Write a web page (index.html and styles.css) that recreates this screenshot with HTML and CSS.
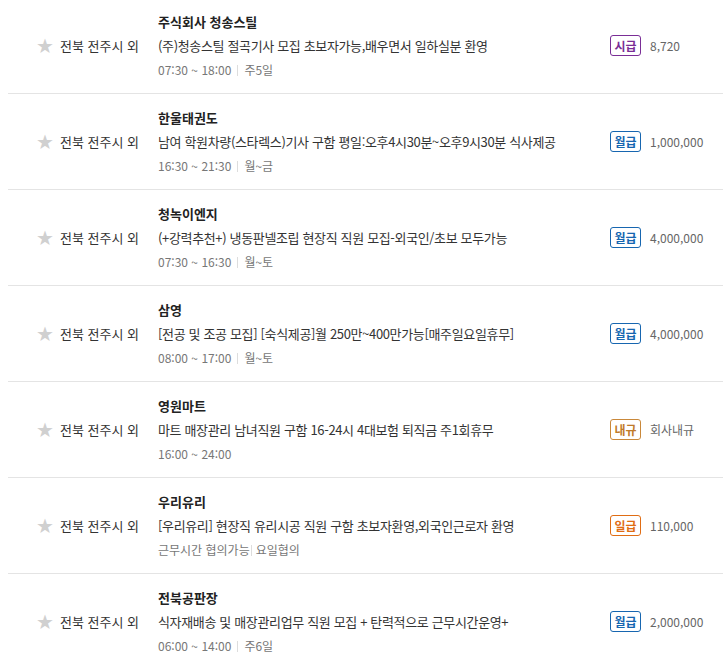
FILE: index.html
```html
<!DOCTYPE html>
<html lang="ko">
<head>
    <meta charset="UTF-8" />
    <title>채용정보</title>
    <link rel="stylesheet" href="styles.css">
</head>
<body>
    <ul class="job-list">
        <li class="job">
            <div class="loc"><span class="star">★</span>전북 전주시 외</div>
            <div class="info">
                <div class="company">주식회사 청송스틸</div>
                <div class="title">(주)청송스틸 절곡기사 모집 초보자가능,배우면서 일하실분 환영</div>
                <div class="meta">07:30 ~ 18:00<span class="bar"></span>주5일</div>
            </div>
            <div class="pay"><span class="badge hour">시급</span>8,720</div>
        </li>
        <li class="job">
            <div class="loc"><span class="star">★</span>전북 전주시 외</div>
            <div class="info">
                <div class="company">한울태권도</div>
                <div class="title">남여 학원차량(스타렉스)기사 구함 평일:오후4시30분~오후9시30분 식사제공</div>
                <div class="meta">16:30 ~ 21:30<span class="bar"></span>월~금</div>
            </div>
            <div class="pay"><span class="badge month">월급</span>1,000,000</div>
        </li>
        <li class="job">
            <div class="loc"><span class="star">★</span>전북 전주시 외</div>
            <div class="info">
                <div class="company">청녹이엔지</div>
                <div class="title">(+강력추천+) 냉동판넬조립 현장직 직원 모집-외국인/초보 모두가능</div>
                <div class="meta">07:30 ~ 16:30<span class="bar"></span>월~토</div>
            </div>
            <div class="pay"><span class="badge month">월급</span>4,000,000</div>
        </li>
        <li class="job">
            <div class="loc"><span class="star">★</span>전북 전주시 외</div>
            <div class="info">
                <div class="company">삼영</div>
                <div class="title">[전공 및 조공 모집] [숙식제공]월 250만~400만가능[매주일요일휴무]</div>
                <div class="meta">08:00 ~ 17:00<span class="bar"></span>월~토</div>
            </div>
            <div class="pay"><span class="badge month">월급</span>4,000,000</div>
        </li>
        <li class="job">
            <div class="loc"><span class="star">★</span>전북 전주시 외</div>
            <div class="info">
                <div class="company">영원마트</div>
                <div class="title">마트 매장관리 남녀직원 구함 16-24시 4대보험 퇴직금 주1회휴무</div>
                <div class="meta">16:00 ~ 24:00</div>
            </div>
            <div class="pay"><span class="badge rule">내규</span>회사내규</div>
        </li>
        <li class="job">
            <div class="loc"><span class="star">★</span>전북 전주시 외</div>
            <div class="info">
                <div class="company">우리유리</div>
                <div class="title">[우리유리] 현장직 유리시공 직원 구함 초보자환영,외국인근로자 환영</div>
                <div class="meta">근무시간 협의가능<span class="bar tight"></span>요일협의</div>
            </div>
            <div class="pay"><span class="badge day">일급</span>110,000</div>
        </li>
        <li class="job">
            <div class="loc"><span class="star">★</span>전북 전주시 외</div>
            <div class="info">
                <div class="company">전북공판장</div>
                <div class="title">식자재배송 및 매장관리업무 직원 모집 + 탄력적으로 근무시간운영+</div>
                <div class="meta">06:00 ~ 14:00<span class="bar"></span>주6일</div>
            </div>
            <div class="pay"><span class="badge month">월급</span>2,000,000</div>
        </li>
    </ul>
</body>
</html>
```

FILE: styles.css
```css
body {
    margin: 0;
    background: #fff;
    font-family: "Noto Sans CJK KR", "Noto Sans", sans-serif;
    font-size: 13px;
    color: #333;
}
.job-list {
    list-style: none;
    margin: -2px 1px 0 8px;
    padding: 0;
}
.job {
    display: flex;
    align-items: center;
    height: 95px;
    border-bottom: 1px solid #e4e4e4;
}
.loc {
    width: 150px;
    display: flex;
    align-items: center;
    color: #333;
    white-space: nowrap;
}
.star {
    margin-left: 28px;
    margin-right: 6px;
    color: #d0d0d0;
    font-size: 20px;
    font-family: "DejaVu Sans", sans-serif;
    line-height: 1;
}
.info {
    flex: 1;
    line-height: 24px;
}
.company {
    font-weight: bold;
    color: #222;
}
.title {
    color: #333;
    letter-spacing: -0.35px;
    white-space: nowrap;
}
.meta {
    color: #777;
    font-size: 12px;
}
.bar {
    display: inline-block;
    width: 1px;
    height: 11px;
    background: #ddd;
    margin: 0 6px;
    vertical-align: -1px;
}
.bar.tight {
    margin: 0 4px 0 1px;
}
.pay {
    width: 113px;
    display: flex;
    align-items: center;
    color: #666;
    font-size: 12px;
    white-space: nowrap;
}
.badge {
    box-sizing: border-box;
    width: 31px;
    height: 21px;
    line-height: 19px;
    margin-right: 9px;
    border: 1px solid;
    border-radius: 3px;
    font-weight: bold;
    font-size: 12px;
    text-align: center;
}
.hour { color: #7a2e96; border-color: #7a2e96; }
.month { color: #1766b0; border-color: #1766b0; }
.rule { color: #c07b2a; border-color: #c9883a; }
.day { color: #e06d14; border-color: #e06d14; }
```
